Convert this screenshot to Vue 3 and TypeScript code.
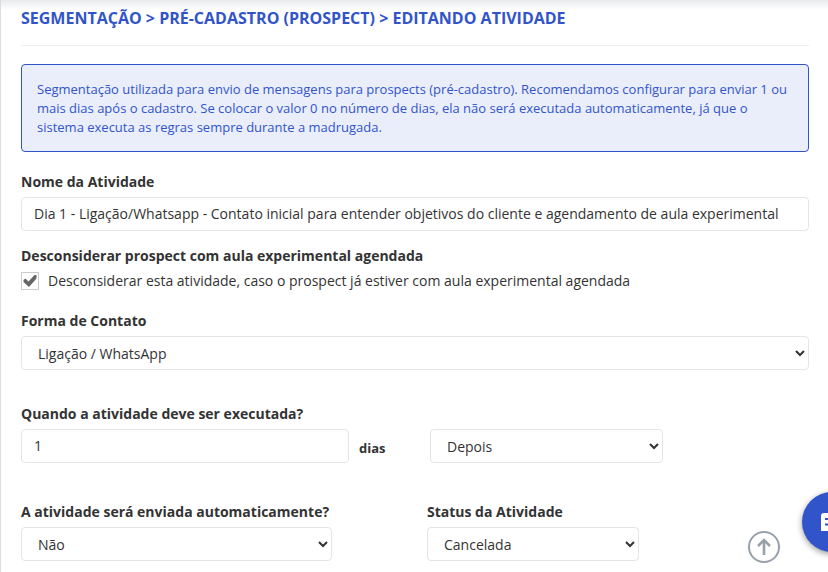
<script setup lang="ts">
import { ref } from 'vue'

const activityName = ref<string>(
  'Dia 1 - Ligação/Whatsapp - Contato inicial para entender objetivos do cliente e agendamento de aula experimental',
)
const ignoreScheduled = ref<boolean>(true)
const contactMethod = ref<string>('Ligação / WhatsApp')
const days = ref<string>('1')
const moment = ref<string>('Depois')
const automatic = ref<string>('Não')
const status = ref<string>('Cancelada')

function scrollToTop(): void {
  window.scrollTo({ top: 0, behavior: 'smooth' })
}
</script>

<template>
  <main class="page">
    <h1 class="title">SEGMENTAÇÃO &gt; PRÉ-CADASTRO (PROSPECT) &gt; EDITANDO ATIVIDADE</h1>

    <p class="notice">
      Segmentação utilizada para envio de mensagens para prospects (pré-cadastro). Recomendamos
      configurar para enviar 1 ou mais dias após o cadastro. Se colocar o valor 0 no número de dias,
      ela não será executada automaticamente, já que o sistema executa as regras sempre durante a
      madrugada.
    </p>

    <form @submit.prevent>
      <div class="field">
        <label class="label" for="name">Nome da Atividade</label>
        <input id="name" v-model="activityName" class="control" type="text" />
      </div>

      <div class="field field-check">
        <span id="ignore-title" class="label">Desconsiderar prospect com aula experimental agendada</span>
        <label class="check">
          <span class="check-box">
            <input v-model="ignoreScheduled" type="checkbox" aria-describedby="ignore-title" />
            <svg v-if="ignoreScheduled" viewBox="0 0 18 18" aria-hidden="true">
              <path d="M2.5 8 4.5 6.5 7.5 9.5 13.5 3H15.5V6.5L8 15 2.5 10z" />
            </svg>
          </span>
          Desconsiderar esta atividade, caso o prospect já estiver com aula experimental agendada
        </label>
      </div>

      <div class="field field-contact">
        <label class="label" for="contact">Forma de Contato</label>
        <select id="contact" v-model="contactMethod" class="control">
          <option>Ligação / WhatsApp</option>
        </select>
      </div>

      <div class="field field-when">
        <label id="when-title" class="label" for="days">Quando a atividade deve ser executada?</label>
        <div class="when-row">
          <input id="days" v-model="days" class="control" type="text" inputmode="numeric" />
          <label class="unit" for="days">dias</label>
          <select v-model="moment" class="control" aria-labelledby="when-title">
            <option>Depois</option>
          </select>
        </div>
      </div>

      <div class="last-row">
        <div>
          <label class="label" for="automatic">A atividade será enviada automaticamente?</label>
          <select id="automatic" v-model="automatic" class="control">
            <option>Não</option>
          </select>
        </div>
        <div class="status">
          <label class="label" for="status">Status da Atividade</label>
          <select id="status" v-model="status" class="control">
            <option>Cancelada</option>
          </select>
        </div>
      </div>
    </form>

    <button class="to-top" type="button" aria-label="Voltar ao topo" @click="scrollToTop">
      <svg viewBox="0 0 32 32" aria-hidden="true">
        <circle cx="16" cy="16" r="15" />
        <path class="arrow" d="M16 24V9.5M10 15l6-6 6 6" />
      </svg>
    </button>
    <button class="chat" type="button" aria-label="Abrir chat">
      <svg viewBox="0 0 22 18" aria-hidden="true">
        <path class="bubble" d="M3 0h16a3 3 0 0 1 3 3v12a3 3 0 0 1-3 3H0V3a3 3 0 0 1 3-3z" />
        <path class="lines" d="M4 6h14M4 11.5h14" />
      </svg>
    </button>
  </main>
</template>

<style>
body {
  margin: 0;
  background: #fff;
}
</style>

<style scoped>
.page {
  box-sizing: border-box;
  min-height: 100vh;
  padding: 6px 19px 11px 20px;
  border-left: 1px solid #ddd;
  background: linear-gradient(#e9eaec, #fff 10px);
  color: #333;
  font-family: 'Open Sans', sans-serif;
  font-size: 14px;
  line-height: 20px;
}

.title {
  margin: 0 0 18px;
  padding-bottom: 15px;
  border-bottom: 1px solid #eee;
  color: #3154cb;
  font-size: 16px;
  font-weight: 700;
  line-height: 24px;
}

.notice {
  margin: 0 0 20px;
  padding: 15px 15px 14px;
  border: 1px solid #3154cb;
  border-radius: 4px;
  background: #eaeefa;
  color: #3154cb;
  font-size: 13px;
  line-height: 19px;
}

.field {
  margin-bottom: 15px;
}

.field-check {
  margin-bottom: 20px;
}

.field-contact {
  margin-bottom: 34px;
}

.field-when {
  margin-bottom: 39px;
}

.label {
  display: block;
  margin-bottom: 5px;
  font-weight: 700;
}

.control {
  display: block;
  box-sizing: border-box;
  width: 100%;
  height: 34px;
  margin: 0;
  padding: 5px 12px 7px;
  border: 1px solid #e5e5e5;
  border-radius: 4px;
  outline: 0;
  background: #fff;
  color: #333;
  font: inherit;
}

select.control {
  padding: 6px 1px 6px 12px;
}

.check {
  display: flex;
  align-items: center;
  gap: 9px;
}

.check-box {
  display: grid;
  width: 18px;
  height: 18px;
}

.check-box > * {
  grid-area: 1 / 1;
  width: 18px;
  height: 18px;
}

.check-box input {
  box-sizing: border-box;
  margin: 0;
  border: 1px solid #ccc;
  background: #fff;
  appearance: none;
}

.check-box svg {
  fill: #666;
  pointer-events: none;
}

.when-row {
  display: grid;
  grid-template-columns: 328fr 81fr 233fr 146fr;
}

.unit {
  padding: 9px 0 0 10px;
  font-size: 13px;
  font-weight: 700;
}

.last-row {
  display: grid;
  grid-template-columns: 311fr 95fr 212fr 170fr;
}

.status {
  grid-column: 3;
}

.to-top,
.chat {
  position: fixed;
  padding: 0;
  border: 0;
  border-radius: 50%;
  cursor: pointer;
}

.to-top {
  right: 48px;
  bottom: 9px;
  width: 32px;
  height: 32px;
  background: none;
}

.to-top svg {
  display: block;
  fill: none;
  stroke: #97a0ab;
  stroke-width: 2;
}

.to-top .arrow {
  stroke-width: 2.6;
}

.chat {
  right: -34px;
  bottom: 20px;
  width: 60px;
  height: 60px;
  background: #3154cb;
  box-shadow: 0 2px 6px rgba(0, 0, 0, 0.4);
}

.chat svg {
  display: block;
  width: 22px;
  height: 18px;
  margin: 0 auto;
}

.bubble {
  fill: #fff;
}

.lines {
  fill: none;
  stroke: #3154cb;
  stroke-width: 2;
}
</style>
